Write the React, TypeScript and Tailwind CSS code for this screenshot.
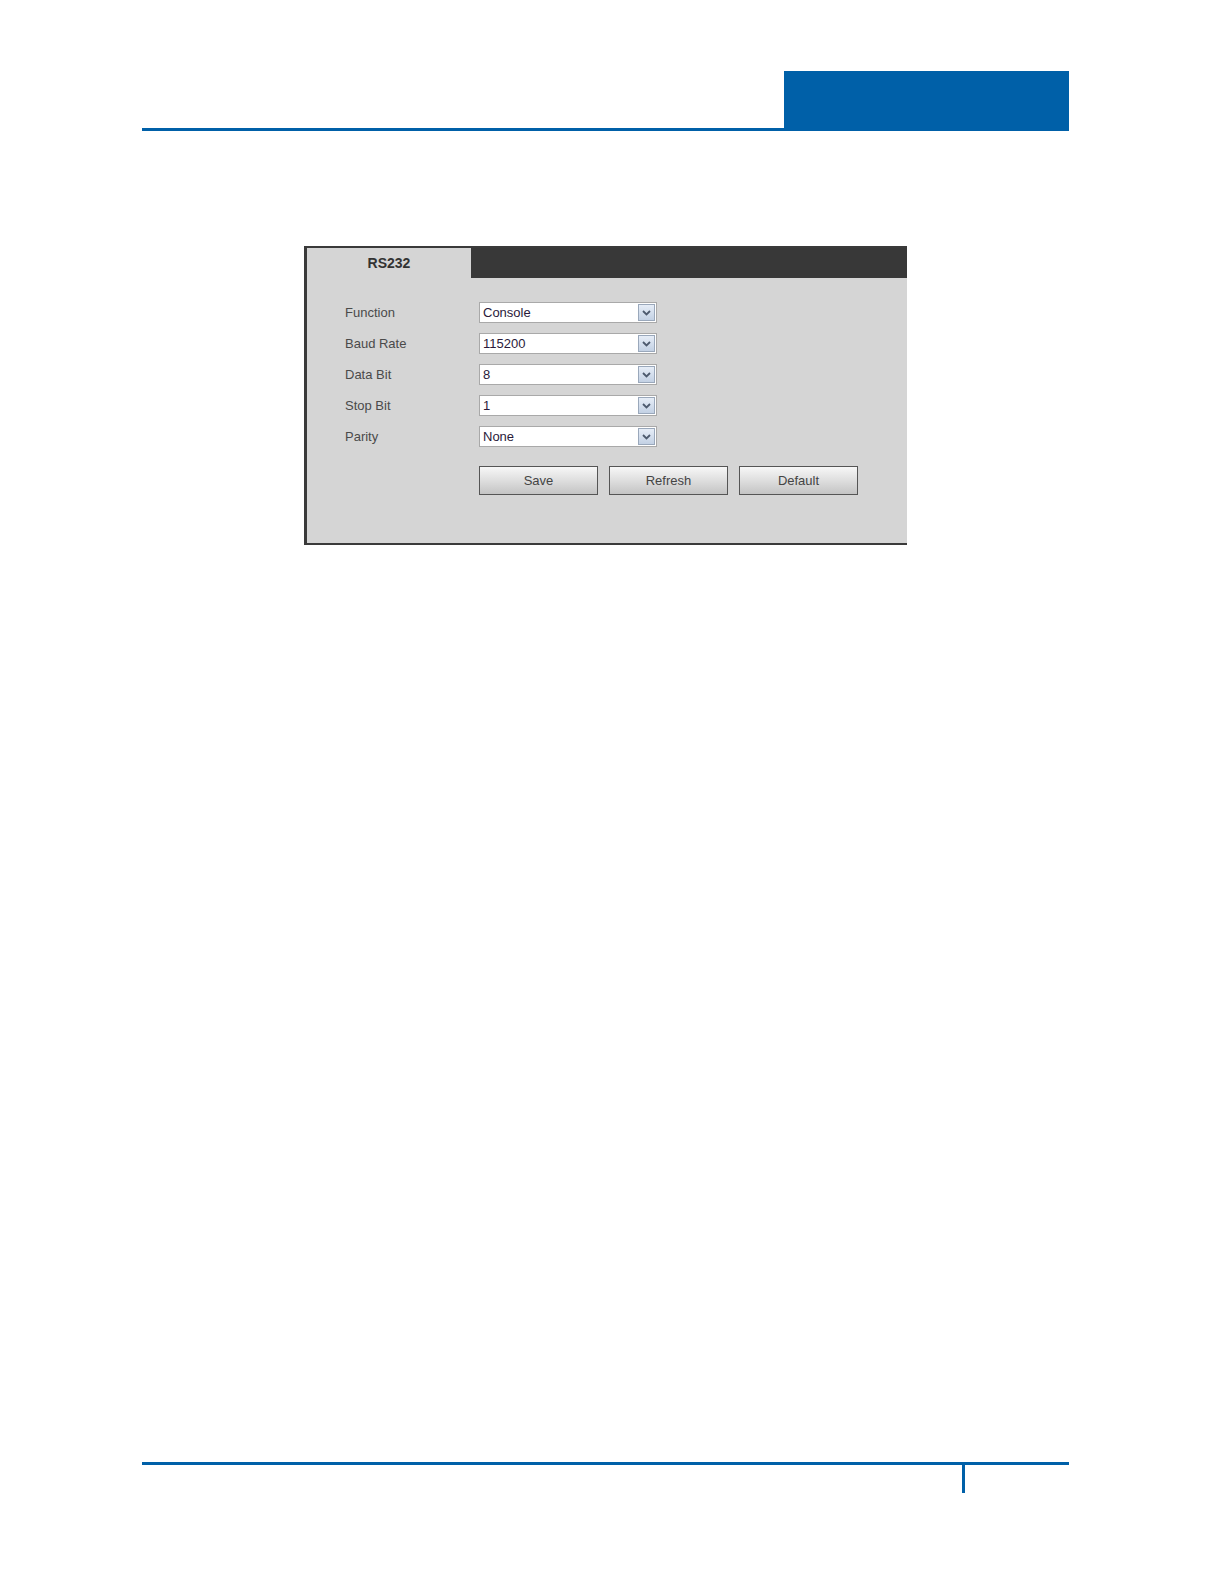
import React from 'react';

const rows = [
  { label: 'Function', value: 'Console' },
  { label: 'Baud Rate', value: '115200' },
  { label: 'Data Bit', value: '8' },
  { label: 'Stop Bit', value: '1' },
  { label: 'Parity', value: 'None' },
];

const SelectBox = ({ value }: { value: string }) => (
  <div className="flex h-[21px] w-[178px] items-stretch border border-[#a9a9a9] bg-white">
    <div className="flex flex-1 items-center pl-[3px] text-[13px] text-[#2a1a3a]">{value}</div>
    <div className="m-[1px] flex w-[17px] items-center justify-center border border-[#9aa8bb] bg-gradient-to-b from-[#e6edf7] to-[#c3d1e4]">
      <svg width="9" height="6" viewBox="0 0 9 6">
        <path d="M1 1 L4.5 4.5 L8 1" fill="none" stroke="#4d5a6e" strokeWidth="1.8" />
      </svg>
    </div>
  </div>
);

const Btn = ({ children }: { children: React.ReactNode }) => (
  <button className="h-[29px] w-[119px] border border-[#555] bg-gradient-to-b from-[#f7f7f7] via-[#dedede] to-[#c4c4c4] text-[13px] text-[#444]">
    {children}
  </button>
);

export default function App() {
  return (
    <div className="relative h-[1584px] w-full overflow-hidden bg-white font-['Liberation_Sans',Arial,sans-serif]">
      {/* header */}
      <div className="flex pt-[71px] pl-[142px]">
        <div className="mt-[57px] h-[3px] w-[642px] bg-[#0060a8]" />
        <div className="h-[60px] w-[285px] bg-[#0060a8]" />
      </div>

      {/* panel */}
      <div className="ml-[304px] mt-[115px] w-[603px] border-t-2 border-b-2 border-l-[3px] border-[#3a3a3a] bg-[#d5d5d5]">
        <div className="flex h-[30px]">
          <div className="flex w-[164px] items-center justify-center pt-[1px] text-[14px] font-bold text-[#333]">
            RS232
          </div>
          <div className="flex-1 bg-[#383838]" />
        </div>

        <div className="pl-[38px] pt-[24px] pb-[48px]">
          <div className="flex flex-col gap-[10px]">
            {rows.map((r) => (
              <div key={r.label} className="flex items-center">
                <div className="w-[134px] text-[13px] text-[#4a4a4a]">{r.label}</div>
                <SelectBox value={r.value} />
              </div>
            ))}
          </div>
          <div className="mt-[19px] flex gap-[11px] pl-[134px]">
            <Btn>Save</Btn>
            <Btn>Refresh</Btn>
            <Btn>Default</Btn>
          </div>
        </div>
      </div>

      {/* footer */}
      <div className="absolute left-[142px] top-[1462px] w-[927px]">
        <div className="h-[3px] bg-[#0060a8]" />
        <div className="ml-[820px] h-[28px] w-[3px] bg-[#0060a8]" />
      </div>
    </div>
  );
}
